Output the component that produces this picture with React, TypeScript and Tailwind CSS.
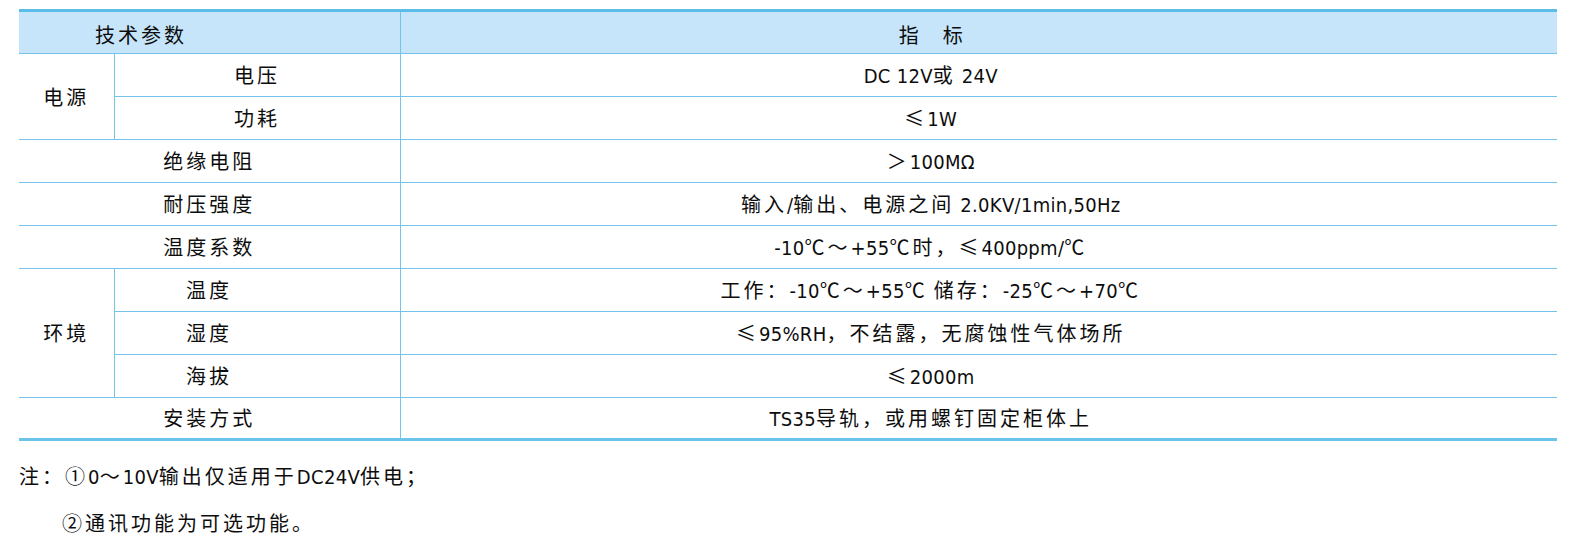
import React from "react";

const CJK = /([\u2103\u2264\u2460-\u24ff\u3000-\u303f\u4e00-\u9fff\uff00-\uffef]+)/;

function T({ s }: { s: string }) {
  const parts = s.split(CJK);
  return (
    <>
      {parts.map((p, i) =>
        p === "" ? null : CJK.test(p) ? (
          <span key={i} className="tracking-[3px]">
            {p}
          </span>
        ) : (
          <span
            key={i}
            className="font-['Liberation_Sans_Narrow','DejaVu_Sans_Condensed','Roboto_Condensed','Roboto',sans-serif] text-[20px] font-stretch-condensed tracking-[0.3px]"
          >
            {p}
          </span>
        ),
      )}
    </>
  );
}

const line = "border-b border-[#74c4ea]";
const vline = "border-r border-[#74c4ea]";

export default function App() {
  return (
    <div className="h-[552px] w-[1584px] bg-white pl-[19px] pt-[9px] font-['Noto_Sans_CJK_SC',sans-serif] text-[20px] text-[#0d0d0d]">
      <table className="w-[1538px] table-fixed border-collapse">
        <colgroup>
          <col className="w-[95px]" />
          <col className="w-[286px]" />
          <col />
        </colgroup>
        <thead>
          <tr className="h-[43px] border-t-[3px] border-[#5bbde8] bg-[#c6e5fa]">
            <th colSpan={2} className={`${line} ${vline} pl-[76px] pt-[4px] text-left font-normal`}>
              <T s="技术参数" />
            </th>
            <th className={`${line} pr-[96px] pt-[4px] font-normal`}>
              <div className="flex justify-center gap-[24px]">
                <span>指</span>
                <span>标</span>
              </div>
            </th>
          </tr>
        </thead>
        <tbody className="text-center">
          <tr className="h-[43px]">
            <td rowSpan={2} className={`${line} ${vline}`}>
              <T s="电源" />
            </td>
            <td className={`${line} ${vline}`}>
              <T s="电压" />
            </td>
            <td className={`${line} pr-[96px]`}>
              <T s="DC 12V或 24V" />
            </td>
          </tr>
          <tr className="h-[43px]">
            <td className={`${line} ${vline}`}>
              <T s="功耗" />
            </td>
            <td className={`${line} pr-[96px]`}>
              <T s="≤1W" />
            </td>
          </tr>
          <tr className="h-[43px]">
            <td colSpan={2} className={`${line} ${vline}`}>
              <T s="绝缘电阻" />
            </td>
            <td className={`${line} pr-[96px]`}>
              <T s="＞100MΩ" />
            </td>
          </tr>
          <tr className="h-[43px]">
            <td colSpan={2} className={`${line} ${vline}`}>
              <T s="耐压强度" />
            </td>
            <td className={`${line} pr-[96px]`}>
              <T s="输入/输出、电源之间 2.0KV/1min,50Hz" />
            </td>
          </tr>
          <tr className="h-[43px]">
            <td colSpan={2} className={`${line} ${vline}`}>
              <T s="温度系数" />
            </td>
            <td className={`${line} pr-[96px]`}>
              <T s="-10℃～+55℃时，≤400ppm/℃" />
            </td>
          </tr>
          <tr className="h-[43px]">
            <td rowSpan={3} className={`${line} ${vline}`}>
              <T s="环境" />
            </td>
            <td className={`${line} ${vline} pr-[96px]`}>
              <T s="温度" />
            </td>
            <td className={`${line} pr-[96px]`}>
              <T s="工作：-10℃～+55℃ 储存：-25℃～+70℃" />
            </td>
          </tr>
          <tr className="h-[43px]">
            <td className={`${line} ${vline} pr-[96px]`}>
              <T s="湿度" />
            </td>
            <td className={`${line} pr-[96px]`}>
              <T s="≤95%RH，不结露，无腐蚀性气体场所" />
            </td>
          </tr>
          <tr className="h-[43px]">
            <td className={`${line} ${vline} pr-[96px]`}>
              <T s="海拔" />
            </td>
            <td className={`${line} pr-[96px]`}>
              <T s="≤2000m" />
            </td>
          </tr>
          <tr className="h-[42px] border-b-[3px] border-[#6cc4ea]">
            <td colSpan={2} className={vline}>
              <T s="安装方式" />
            </td>
            <td className="pr-[96px]">
              <T s="TS35导轨，或用螺钉固定柜体上" />
            </td>
          </tr>
        </tbody>
      </table>
      <div className="mt-[22px] flex flex-col gap-[20px] leading-[26px]">
        <div>
          <T s="注：①0～10V输出仅适用于DC24V供电；" />
        </div>
        <div className="pl-[43px]">
          <T s="②通讯功能为可选功能。" />
        </div>
      </div>
    </div>
  );
}
